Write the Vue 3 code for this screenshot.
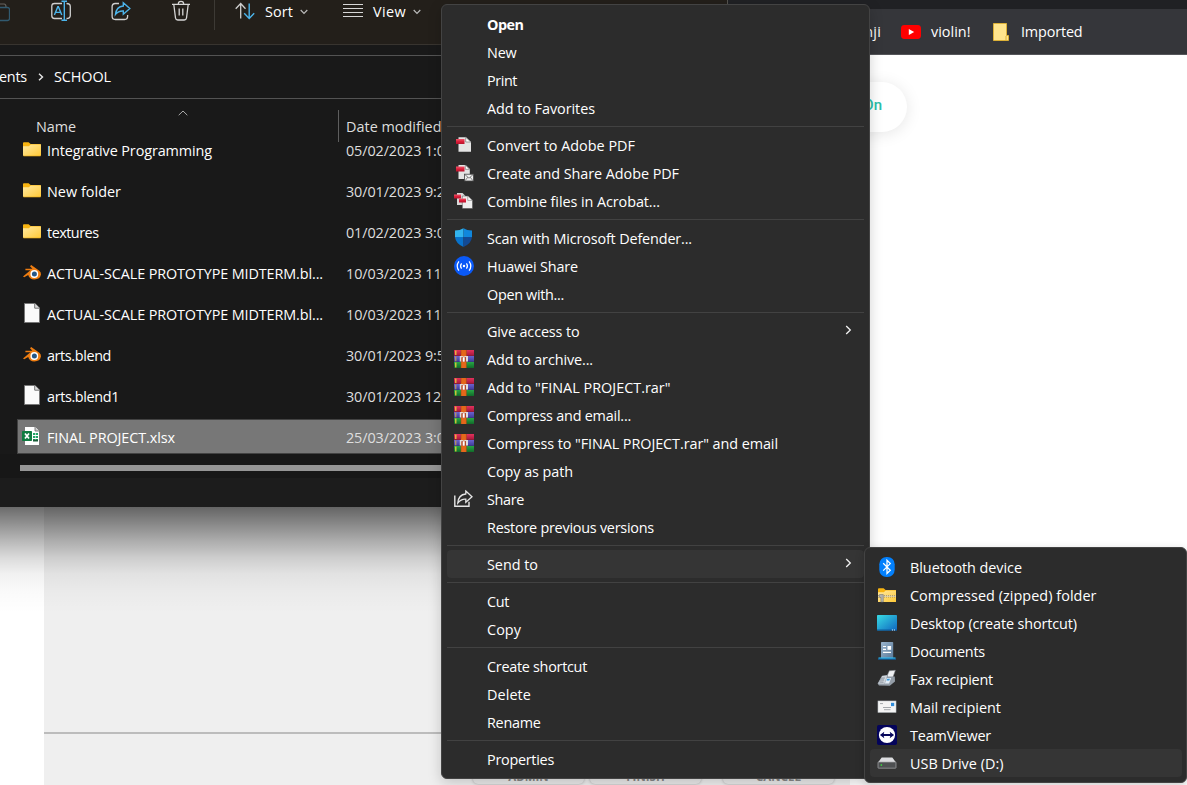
<script setup>
// Spreads a label's letters so that it takes the given width in pixels.
const vFit = {
  mounted(el, { value }) {
    if (!value) return
    const natural = el.getBoundingClientRect().width
    el.style.letterSpacing = (value - 0.5 - natural) / el.textContent.length + 'px'
  },
}

const files = [
  { icon: 'folder', name: 'Integrative Programming', w: 165.5, date: '05/02/2023 1:02 pm', dw: 133 },
  { icon: 'folder', name: 'New folder', w: 74.5, date: '30/01/2023 9:24 pm', dw: 133 },
  { icon: 'folder', name: 'textures', w: 52, date: '01/02/2023 3:03 pm', dw: 133 },
  { icon: 'blender', name: 'ACTUAL-SCALE PROTOTYPE MIDTERM.bl...', w: 276.5, date: '10/03/2023 11:20 am', dw: 141 },
  { icon: 'page', name: 'ACTUAL-SCALE PROTOTYPE MIDTERM.bl...', w: 276.5, date: '10/03/2023 11:14 am', dw: 141 },
  { icon: 'blender', name: 'arts.blend', w: 64.5, date: '30/01/2023 9:52 pm', dw: 133 },
  { icon: 'page', name: 'arts.blend1', w: 72.5, date: '30/01/2023 12:45 pm', dw: 141 },
  { icon: 'excel', name: 'FINAL PROJECT.xlsx', w: 128.5, date: '25/03/2023 3:01 pm', dw: 133, selected: true },
]

const groups = [
  [
    { t: 'Open', w: 37, bold: true },
    { t: 'New', w: 30 },
    { t: 'Print', w: 30.5 },
    { t: 'Add to Favorites', w: 108.5 },
  ],
  [
    { t: 'Convert to Adobe PDF', w: 148.5, icon: 'pdf' },
    { t: 'Create and Share Adobe PDF', w: 192.5, icon: 'pdfmail' },
    { t: 'Combine files in Acrobat...', w: 173.5, icon: 'pdfs' },
  ],
  [
    { t: 'Scan with Microsoft Defender...', w: 205.5, icon: 'shield' },
    { t: 'Huawei Share', w: 91.5, icon: 'huawei' },
    { t: 'Open with...', w: 77.5 },
  ],
  [
    { t: 'Give access to', w: 93, arrow: true },
    { t: 'Add to archive...', w: 106.5, icon: 'rar' },
    { t: 'Add to "FINAL PROJECT.rar"', w: 184, icon: 'rar' },
    { t: 'Compress and email...', w: 144.5, icon: 'rar' },
    { t: 'Compress to "FINAL PROJECT.rar" and email', w: 291.5, icon: 'rar' },
    { t: 'Copy as path', w: 86.5 },
    { t: 'Share', w: 37.5, icon: 'share' },
    { t: 'Restore previous versions', w: 167.5 },
  ],
  [{ t: 'Send to', w: 51.5, arrow: true, active: true }],
  [
    { t: 'Cut', w: 22.5 },
    { t: 'Copy', w: 34.5 },
  ],
  [
    { t: 'Create shortcut', w: 100.5 },
    { t: 'Delete', w: 44.5 },
    { t: 'Rename', w: 54 },
  ],
  [{ t: 'Properties', w: 67.5 }],
]

const targets = [
  { t: 'Bluetooth device', w: 112.5, icon: 'bluetooth' },
  { t: 'Compressed (zipped) folder', w: 187, icon: 'zip' },
  { t: 'Desktop (create shortcut)', w: 167.5, icon: 'desktop' },
  { t: 'Documents', w: 75.5, icon: 'documents' },
  { t: 'Fax recipient', w: 83.5, icon: 'fax' },
  { t: 'Mail recipient', w: 91.5, icon: 'mail' },
  { t: 'TeamViewer', w: 81.5, icon: 'teamviewer' },
  { t: 'USB Drive (D:)', w: 94, icon: 'drive', active: true },
]
</script>

<template>
  <div class="screen">
    <svg class="defs" width="0" height="0">
      <defs>
        <linearGradient id="gFolder" x1="0" y1="0" x2="1" y2="1">
          <stop offset="0" stop-color="#ffe9a2" /><stop offset="1" stop-color="#ffc937" />
        </linearGradient>
        <linearGradient id="gDesk" x1="0" y1="0" x2="1" y2="1">
          <stop offset="0" stop-color="#38dbe4" /><stop offset="1" stop-color="#0f66c0" />
        </linearGradient>
        <linearGradient id="gRed" x1="0" y1="0" x2="0" y2="1">
          <stop offset="0" stop-color="#f0566a" /><stop offset=".5" stop-color="#dc1f3a" /><stop offset="1" stop-color="#b5122b" />
        </linearGradient>
        <linearGradient id="gDoc" x1="0" y1="0" x2="1" y2="1">
          <stop offset="0" stop-color="#9db7cf" /><stop offset="1" stop-color="#587797" />
        </linearGradient>
        <linearGradient id="gR" x1="0" y1="0" x2="0" y2="1">
          <stop offset="0" stop-color="#e3325c" /><stop offset="1" stop-color="#a5163c" />
        </linearGradient>
        <linearGradient id="gB" x1="0" y1="0" x2="0" y2="1">
          <stop offset="0" stop-color="#6a63cf" /><stop offset="1" stop-color="#3f3a99" />
        </linearGradient>
        <linearGradient id="gG" x1="0" y1="0" x2="0" y2="1">
          <stop offset="0" stop-color="#28a745" /><stop offset="1" stop-color="#116b2a" />
        </linearGradient>
      </defs>
      <symbol id="folder" viewBox="0 0 20 20">
        <path d="M1 4.2Q1 3.3 1.9 3.3H6.6L8.6 5H18.2Q19 5 19 5.8V10H1Z" fill="#f8b411" />
        <path d="M1 7.3H6.8L8.8 5.6H19V16.2Q19 17 18.2 17H1.8Q1 17 1 16.2Z" fill="url(#gFolder)" />
        <path d="M1.5 17H18.5" stroke="#e9a70d" stroke-width=".6" />
      </symbol>
      <symbol id="blender" viewBox="0 0 20 20">
        <path d="M1 14.4 8.4 8.2H3.4V6.8H10.4L8 4.2 9.2 3 17 8.6Q19.2 10.3 19 12.6 18 17.4 12.4 17.6 7.2 17.2 6.2 13L2.2 15.2Z" fill="#ee7d11" />
        <circle cx="12.3" cy="12" r="3.9" fill="#fff" /><circle cx="12.4" cy="12" r="2.5" fill="#265787" />
      </symbol>
      <symbol id="page" viewBox="0 0 20 20">
        <path d="M2.5.5H13L17.5 5V19.5H2.5Z" fill="#fafafa" stroke="#777" /><path d="M12.7.6V5.2H17.4" fill="#ddd" stroke="#777" />
      </symbol>
      <symbol id="excel" viewBox="0 0 20 20">
        <path d="M3 1H13.2L17 4.8V19H3Z" fill="#fff" /><path d="M13 1V5H17" fill="#ccc" stroke="#666" stroke-width=".8" />
        <path d="M11 8H16M11 11H16M11 14H16" stroke="#21a366" stroke-width="2" stroke-dasharray="2.2 .6" /><path d="M11 14.5H16" stroke="#185c37" stroke-width="2" />
        <rect x="0" y="5" width="10" height="10" rx=".8" fill="#107c41" /><path d="M3 7.4 7 12.6M7 7.4 3 12.6" stroke="#fff" stroke-width="1.7" />
      </symbol>
      <symbol id="pdf" viewBox="0 0 20 20">
        <path d="M4.5 2.3H12L17 7V16.8H4.5Z" fill="#e4e4e4" /><path d="M11.7 2.2V7H16.8Z" fill="#fff" stroke="#777" stroke-width=".7" />
        <rect x="2" y="4" width="8.5" height="5" fill="url(#gRed)" />
      </symbol>
      <symbol id="pdfmail" viewBox="0 0 20 20">
        <path d="M4.5 2H11.5L15.8 6V16H4.5Z" fill="#e4e4e4" /><path d="M11.3 2V6.3H15.6Z" fill="#fff" stroke="#777" stroke-width=".7" />
        <rect x="2" y="3.5" width="8.5" height="5" fill="url(#gRed)" />
        <rect x="10.5" y="11.2" width="9" height="6.8" fill="#eee" stroke="#444" stroke-width=".8" /><path d="M10.7 11.4 15 15.2 19.3 11.4M11 17.8 13.8 14.2M19 17.8 16.2 14.2" fill="none" stroke="#666" stroke-width=".8" />
      </symbol>
      <symbol id="pdfs" viewBox="0 0 20 20">
        <path d="M3 2H8.5L12.5 6V14H3Z" fill="#d8d8d8" /><path d="M8.3 5H14L18.5 9.3V17.5H8.3Z" fill="#eee" stroke="#444" stroke-width=".5" />
        <path d="M13.8 5V9.4H18.3Z" fill="#fff" stroke="#777" stroke-width=".6" />
        <rect x="0" y="3.5" width="7" height="4" fill="url(#gRed)" /><rect x="5" y="7.5" width="7" height="4" fill="url(#gRed)" />
      </symbol>
      <symbol id="shield" viewBox="0 0 20 20">
        <path d="M9.5.2Q6 2.6 1 2.6V9H9.5Z" fill="#32b4ee" /><path d="M9.5.2Q13 2.6 18 2.6V9H9.5Z" fill="#1087dc" />
        <path d="M1 8.9H9.5V18.9Q1.6 15.4 1 8.9Z" fill="#0873cc" /><path d="M18 8.9H9.5V18.9Q17.4 15.4 18 8.9Z" fill="#124a94" />
      </symbol>
      <symbol id="huawei" viewBox="0 0 20 20">
        <circle cx="10" cy="10" r="10" fill="#0a59f7" /><circle cx="10" cy="10" r="1.2" fill="#fff" />
        <path d="M7.6 7.3Q5.5 10 7.6 12.7M12.4 7.3Q14.5 10 12.4 12.7M4.9 5.3Q1.5 10 4.9 14.7M15.1 5.3Q18.5 10 15.1 14.7" fill="none" stroke="#fff" stroke-width="1.2" />
      </symbol>
      <symbol id="rar" viewBox="0 0 20 20">
        <rect y="1" width="20" height="5.8" fill="url(#gR)" /><rect y="7" width="20" height="5.8" fill="url(#gB)" /><rect y="13" width="20" height="6" fill="url(#gG)" />
        <path d="M1.8 1.5V6M1.8 13.6V18.4" stroke="#f2d13c" stroke-width="1.2" /><path d="M1.8 7.5V12.3" stroke="#e8b63b" stroke-width=".9" />
        <rect x="7" y="1" width="5.4" height="18" fill="#e5671b" /><path d="M7 7H5.8V12.4H7.4V9.2Q7.5 7.4 9.7 7.4 12 7.4 12 9.2V12.4H14V7Z" fill="#ddd" />
        <rect x="7.6" y="8" width="4.2" height="4.8" fill="#aa4028" /><rect x="8.7" y="8.2" width="2" height="4.5" fill="#fff" />
        <path d="M7 1V6M12.4 1V6M7 13V19M12.4 13V19" stroke="#934812" stroke-width=".5" />
      </symbol>
      <symbol id="share" viewBox="0 0 20 20">
        <path d="M.8 6.5V17.2H15V12.7" fill="none" stroke="#e6e6e6" stroke-width="1.4" />
        <path d="M11.8 2.1 18 7.7 11.8 13.2V10.2Q7.2 9.8 3.8 14 4.4 5.6 11.8 5Z" fill="none" stroke="#e6e6e6" stroke-width="1.3" />
      </symbol>
      <symbol id="bluetooth" viewBox="0 0 20 20">
        <rect x="2.3" y="0" width="15.4" height="20" rx="7.2" fill="#0380fc" />
        <path d="M6.2 6.3 13.3 13.3 10 16.5V3.2L13.3 6.6 6.2 13.6" fill="none" stroke="#fff" stroke-width="1.25" />
      </symbol>
      <symbol id="zip" viewBox="0 0 20 20">
        <path d="M1 4.2Q1 3.3 1.9 3.3H6.6L8.6 5H19V10H1Z" fill="#f8b411" /><path d="M1 7.3H6.8L8.8 5.6H19V17H1Z" fill="url(#gFolder)" />
        <path d="M1 10.5H19M1 12H19" stroke="#a38b4d" stroke-width="1" stroke-dasharray="1 1" /><path d="M1 11.2H19" stroke="#d0d0d0" stroke-width=".9" />
        <path d="M2.5 9.5H6.3V17H3.9V12.5H2.5Z" fill="#b2b2ac" stroke="#6e6e6e" stroke-width=".5" />
      </symbol>
      <symbol id="desktop" viewBox="0 0 20 20">
        <rect y="2" width="20" height="15.5" rx=".7" fill="url(#gDesk)" /><path d="M0 17H14M18.5 17H20" stroke="#0a5a9d" /><path d="M15 17H16M17 17H18" stroke="#d7f0ff" />
      </symbol>
      <symbol id="documents" viewBox="0 0 20 20">
        <rect x="4" y="1" width="12.2" height="16.5" rx=".7" fill="url(#gDoc)" /><path d="M6 5.5H9M6 8.3H9M6 11.3H14" stroke="#fff" stroke-width="1.2" /><rect x="10.5" y="5" width="3.6" height="3.8" fill="#fff" />
        <path d="M1.5 17.1H18.5" stroke="#31bdf2" stroke-width="1.3" /><path d="M1 18.1H19" stroke="#0871c4" stroke-width=".9" />
      </symbol>
      <symbol id="fax" viewBox="0 0 20 20">
        <path d="M9.4 8.6 12.3 1.8 18.4 1.3 15.6 9Z" fill="#eef0f2" stroke="#7a7e84" stroke-width=".5" />
        <path d="M.6 14.6 5 6.7 10.5 6 11 7.5 17.8 7.6 18 12.5 12.8 16.8 2 16.4Z" fill="#939ca6" /><path d="M5.2 7 10.2 6.5 7.4 14.8 1.2 14.4Z" fill="#cfd5dc" />
        <path d="M9.8 9H14.2L12 14.4H7.9Z" fill="#e3edf7" /><path d="M10.2 9.8H13L12.3 11.4H9.5Z" fill="#3798d9" /><path d="M3.8 9.2 7.8 9M3 11 7 11M2.4 13 6.5 13.2" stroke="#68737e" stroke-width=".7" />
      </symbol>
      <symbol id="mail" viewBox="0 0 20 20">
        <rect x="1" y="4" width="18" height="11.3" fill="#f4f4f4" stroke="#c4c8cc" stroke-width=".6" /><rect x="14" y="5.8" width="3.2" height="3.3" fill="#2f8ddb" />
        <path d="M3 6.6H6M6 10.5H14M7 12.7H13.5" stroke="#a5a9ad" stroke-width="1" />
      </symbol>
      <symbol id="teamviewer" viewBox="0 0 20 20">
        <rect width="20" height="20" rx="1.8" fill="#04045b" /><circle cx="10" cy="10" r="8.1" fill="#fff" />
        <path d="M2.9 10 7.3 6.8 6.7 9.1H13.3L12.7 6.8 17.1 10 12.7 13.2 13.3 10.9H6.7L7.3 13.2Z" fill="#07075b" />
      </symbol>
      <symbol id="drive" viewBox="0 0 20 20">
        <path d="M4.7 4.5H15.3L19 9.5H1Z" fill="#dcdde0" /><rect x="1" y="9" width="18" height="6.2" rx=".6" fill="#4e5052" stroke="#a9abae" stroke-width=".7" /><rect x="3.6" y="11.3" width="1.5" height="1.5" fill="#37e03c" />
      </symbol>
    </svg>

    <section class="browser">
      <div class="tabstrip"></div>
      <div class="bookmarks">
        <span v-fit="34.5" class="bm kanji">Kanji</span>
        <svg width="20" height="14" viewBox="0 0 20 14"><rect width="20" height="14" rx="3.4" fill="#f00" /><path d="M7.8 4V10L13.2 7Z" fill="#fff" /></svg>
        <div class="violin"><span v-fit="40" class="bm">violin!</span></div>
        <svg class="bmf" width="16" height="18" viewBox="0 0 16 18"><path d="M.5.5H13.5V12.5H15.5V17.5H.5Z" fill="#ffe58d" stroke="#dcb137" /><path d="M13 13V17" stroke="#dcb137" /></svg>
        <span v-fit="62" class="bm imported">Imported</span>
      </div>
      <div class="page">
        <div class="sheet">
          <div class="upper"></div>
          <div class="lower">
            <span class="key">ADMIN</span>
            <span class="key">FINISH</span>
            <span class="key last">CANCEL</span>
          </div>
        </div>
        <div class="pill">On</div>
      </div>
    </section>
    <div class="winshade"></div>

    <section class="explorer">
      <header class="tools">
        <svg class="cutoff" width="10" height="24" viewBox="0 0 10 24"><path d="M0 4H4Q6 4 6 7" fill="none" stroke="#66635e" stroke-width="1.2" /><rect x="-5" y="7.5" width="14.5" height="13" rx="2" fill="none" stroke="#315a70" stroke-width="1.3" /></svg>
        <svg class="rename" width="20" height="22" viewBox="0 0 20 22"><path d="M11 3.5H3.5Q.8 3.5 .8 6.2V15.8Q.8 18.5 3.5 18.5H11M15.5 3.5Q19.3 3.5 19.3 6.5V15.5Q19.3 18.5 15.5 18.5" fill="none" stroke="#cfcfcf" stroke-width="1.3" /><path d="M10.5 1.2H16M10.5 20.3H16M13.3 1.2V20.3M3.4 15 6.8 6.8H7.4L10.8 15M4.7 12.4H9.5" fill="none" stroke="#4cb4ea" stroke-width="1.4" /></svg>
        <svg class="tshare" width="20" height="20" viewBox="0 0 20 20"><path d="M8 2.5H4.3Q1.1 2.5 1.1 5.7V15.3Q1.1 18.5 4.3 18.5H13.5Q16.6 18.5 16.6 15.3V14" fill="none" stroke="#cfcfcf" stroke-width="1.3" /><path d="M12.3 1.8 18.8 7.6 12.3 13.2V10Q7.6 9.6 4.5 13.4 5.3 5.6 12.3 5Z" fill="none" stroke="#4cb4ea" stroke-width="1.4" /></svg>
        <svg class="trash" width="20" height="22" viewBox="0 0 20 22"><path d="M1 4.3H19M7.3 4Q7.3 1.3 10 1.3T12.7 4M2.8 4.5 4.5 18Q4.8 20 6.8 20H13.2Q15.2 20 15.5 18L17.2 4.5M8.2 8.5V15.5M11.8 8.5V15.5" fill="none" stroke="#d6d6d6" stroke-width="1.3" /></svg>
        <i class="vbar"></i>
        <svg class="sort" width="20" height="18" viewBox="0 0 20 18"><path d="M5.7 16.5V1.5M.7 6.7 5.7 1.5 10.5 6.7" fill="none" stroke="#cfcfcf" stroke-width="1.3" /><path d="M14.2 1.5V16.5M9.2 11.3 14.2 16.5 19.2 11.3" fill="none" stroke="#4cb4ea" stroke-width="1.4" /></svg>
        <span v-fit="28.5" class="tlabel">Sort</span>
        <svg class="chev" width="8" height="6" viewBox="0 0 8 6"><path d="M.7 1 4 4.3 7.3 1" fill="none" stroke="#bbb" stroke-width="1.2" /></svg>
        <svg class="lines" width="20" height="16" viewBox="0 0 20 16"><path d="M0 1.5H20M0 5.5H20M0 9.5H20M0 13.5H20" stroke="#d6d6d6" stroke-width="1.2" /></svg>
        <span v-fit="33.5" class="tlabel">View</span>
        <svg class="chev" width="8" height="6" viewBox="0 0 8 6"><path d="M.7 1 4 4.3 7.3 1" fill="none" stroke="#bbb" stroke-width="1.2" /></svg>
      </header>
      <nav class="address">
        <span v-fit="75.5" class="doc">Documents</span>
        <svg width="6" height="8" viewBox="0 0 6 8"><path d="M1 .8 4.5 4 1 7.2" fill="none" stroke="#e8e8e8" stroke-width="1.4" /></svg>
        <span v-fit="57.5">SCHOOL</span>
      </nav>
      <div class="heads">
        <div class="hname"><span v-fit="40.5">Name</span></div>
        <svg class="up" width="10" height="6" viewBox="0 0 10 6"><path d="M.7 5.2 5 1 9.3 5.2" fill="none" stroke="#aaa" /></svg>
        <div class="hdate"><span v-fit="96">Date modified</span></div>
      </div>
      <div class="rows">
        <div v-for="(f, i) in files" :key="i" class="row" :class="{ selected: f.selected }">
          <svg width="20" height="20"><use :href="'#' + f.icon" /></svg>
          <div class="fname"><span v-fit="f.w">{{ f.name }}</span></div>
          <div class="fdate"><span v-fit="f.dw">{{ f.date }}</span></div>
        </div>
      </div>
      <div class="track"><div class="thumb"></div></div>
      <div class="status"></div>
    </section>

    <div class="menu main">
      <div v-for="(g, gi) in groups" :key="gi" class="group">
        <div v-for="m in g" :key="m.t" class="item" :class="{ bold: m.bold, active: m.active }">
          <svg class="ico" width="20" height="20"><use v-if="m.icon" :href="'#' + m.icon" /></svg>
          <span v-fit="m.w">{{ m.t }}</span>
          <svg v-if="m.arrow" class="arrow" width="7" height="10" viewBox="0 0 7 10"><path d="M1.2 1 5.3 5 1.2 9" fill="none" stroke="#f2f2f2" stroke-width="1.3" /></svg>
        </div>
      </div>
    </div>

    <div class="menu sub">
      <div v-for="m in targets" :key="m.t" class="item" :class="{ active: m.active }">
        <svg class="ico" width="20" height="20"><use :href="'#' + m.icon" /></svg>
        <span v-fit="m.w">{{ m.t }}</span>
      </div>
    </div>
  </div>
</template>

<style>
body { margin: 0; overflow: hidden; }
</style>

<style scoped>
.screen { position: relative; width: 1187px; height: 785px; overflow: hidden; background: #fff; font-family: "Open Sans", "Noto Sans", sans-serif; font-size: 14.4px; color: #fff; white-space: nowrap; }
.screen span { display: inline-block; }
.screen svg { flex: none; display: block; }
.defs { position: absolute; }

.browser { display: flex; flex-direction: column; height: 785px; }
.tabstrip { flex: none; height: 9px; background: #202124; }
.bookmarks { flex: none; height: 46px; box-sizing: border-box; border-bottom: 1px solid #55565a; background: #35363a; display: flex; align-items: center; padding-left: 847px; }
.bm { line-height: 20px; }
.kanji { margin-right: 20px; }
.violin { margin-left: 10px; width: 62px; }
.imported { margin-left: 12px; }
.page { flex: none; height: 730px; display: flex; position: relative; background: #fff; }
.sheet { margin-left: 44px; width: 806px; height: 730px; display: flex; flex-direction: column; background: #efefef; }
.upper { flex: none; height: 677px; border-bottom: 2px solid #bcbcbc; }
.lower { flex: 1; display: flex; align-items: flex-start; padding: 5px 0 0 429px; overflow: hidden; }
.key { width: 111px; height: 45px; margin-right: 6px; border-radius: 5px; background: #eaeaea; box-shadow: 0 0 3px #aaa; color: #888; text-align: center; font: bold 11.5px/76px "Open Sans", sans-serif; }
.key:nth-child(2) { margin-right: 22px; }
.pill { position: absolute; left: 800px; top: 27px; width: 107px; height: 50px; box-sizing: border-box; border-radius: 25px; background: #fff; box-shadow: 0 2px 16px rgba(0, 0, 0, .1); color: #2bbfa9; text-align: right; padding-right: 25px; font: 500 15px/46px Roboto, sans-serif; }

.winshade { position: absolute; left: 0; top: 507px; width: 760px; height: 106px; background: linear-gradient(rgba(0,0,0,.58), rgba(0,0,0,.44) 15%, rgba(0,0,0,.28) 32%, rgba(0,0,0,.14) 48%, rgba(0,0,0,.055) 63%, rgba(0,0,0,.02) 80%, transparent); }

.explorer { position: absolute; left: 0; top: 0; width: 727px; height: 507px; border-right: 1px solid #55534f; background: #191919; overflow: hidden; }
.tools { height: 44px; border-bottom: 1px solid #38342f; background: #231f1a; display: flex; align-items: flex-start; }
.rename { margin: 0 0 0 41px; }
.tshare { margin: 1px 0 0 40px; }
.trash { margin: 0 0 0 40px; }
.vbar { width: 1px; height: 30px; background: #3d3a35; margin-left: 23px; }
.sort { margin: 2px 0 0 20px; }
.tlabel { line-height: 20px; margin: 2px 0 0 10px; }
.chev { margin: 9px 0 0 7px; width: 8px; }
.lines { margin: 3px 0 0 35px; }
.address { margin-top: 10px; height: 42px; border-top: 1px solid #535353; border-bottom: 1px solid #535353; display: flex; align-items: center; }
.address span { margin-top: -2px; }
.address .doc { margin-left: -48px; }
.address svg { margin: 0 10px 0 11px; }
.heads { height: 33px; display: flex; position: relative; color: #dedede; line-height: 20px; }
.hname { margin: 18px 0 0 36px; width: 142px; }
.up { margin-top: 11px; }
.hdate { margin: 11px 0 -10px 150px; padding: 7px 0 5px 7px; height: 20px; border-left: 1px solid #5e5e5e; }
.rows { display: flex; flex-direction: column; gap: 6px; margin-left: 17px; }
.row { height: 33px; border: 1px solid transparent; display: flex; align-items: center; padding-left: 4px; }
.row svg { margin-top: -2px; }
.selected { background: #777; border-color: #424242; }
.fname { width: 299px; margin: 2px 0 0 5px; }
.fdate { color: #dedede; margin-top: 2px; }
.track { height: 24px; background: #171717; padding: 11px 0 0 20px; box-sizing: border-box; }
.thumb { height: 6px; background: #959595; }
.status { height: 30px; background: #1c1c1c; }

.menu { position: absolute; box-sizing: border-box; background: #2c2c2c; border: 1px solid #434343; border-radius: 6px; padding: 5px; color: #fff; }
.main { left: 441px; top: 4px; width: 429px; height: 775px; box-shadow: 0 4px 14px rgba(0, 0, 0, .18); }
.sub { left: 864px; top: 547px; width: 323px; height: 236px; padding-right: 4px; box-shadow: 0 3px 10px rgba(0, 0, 0, .2); }
.group + .group::before { content: ""; display: block; height: 1px; background: #424242; margin: 4px 0; }
.item { height: 28px; display: flex; align-items: center; padding-left: 7px; border-radius: 4px; }
.ico { margin: 0 13px 0 0; }
.main .ico { margin-top: -1px; }
.active { background: #353535; }
.bold { font-weight: 700; }
.arrow { margin: -3px 12px 0 auto; }
</style>
